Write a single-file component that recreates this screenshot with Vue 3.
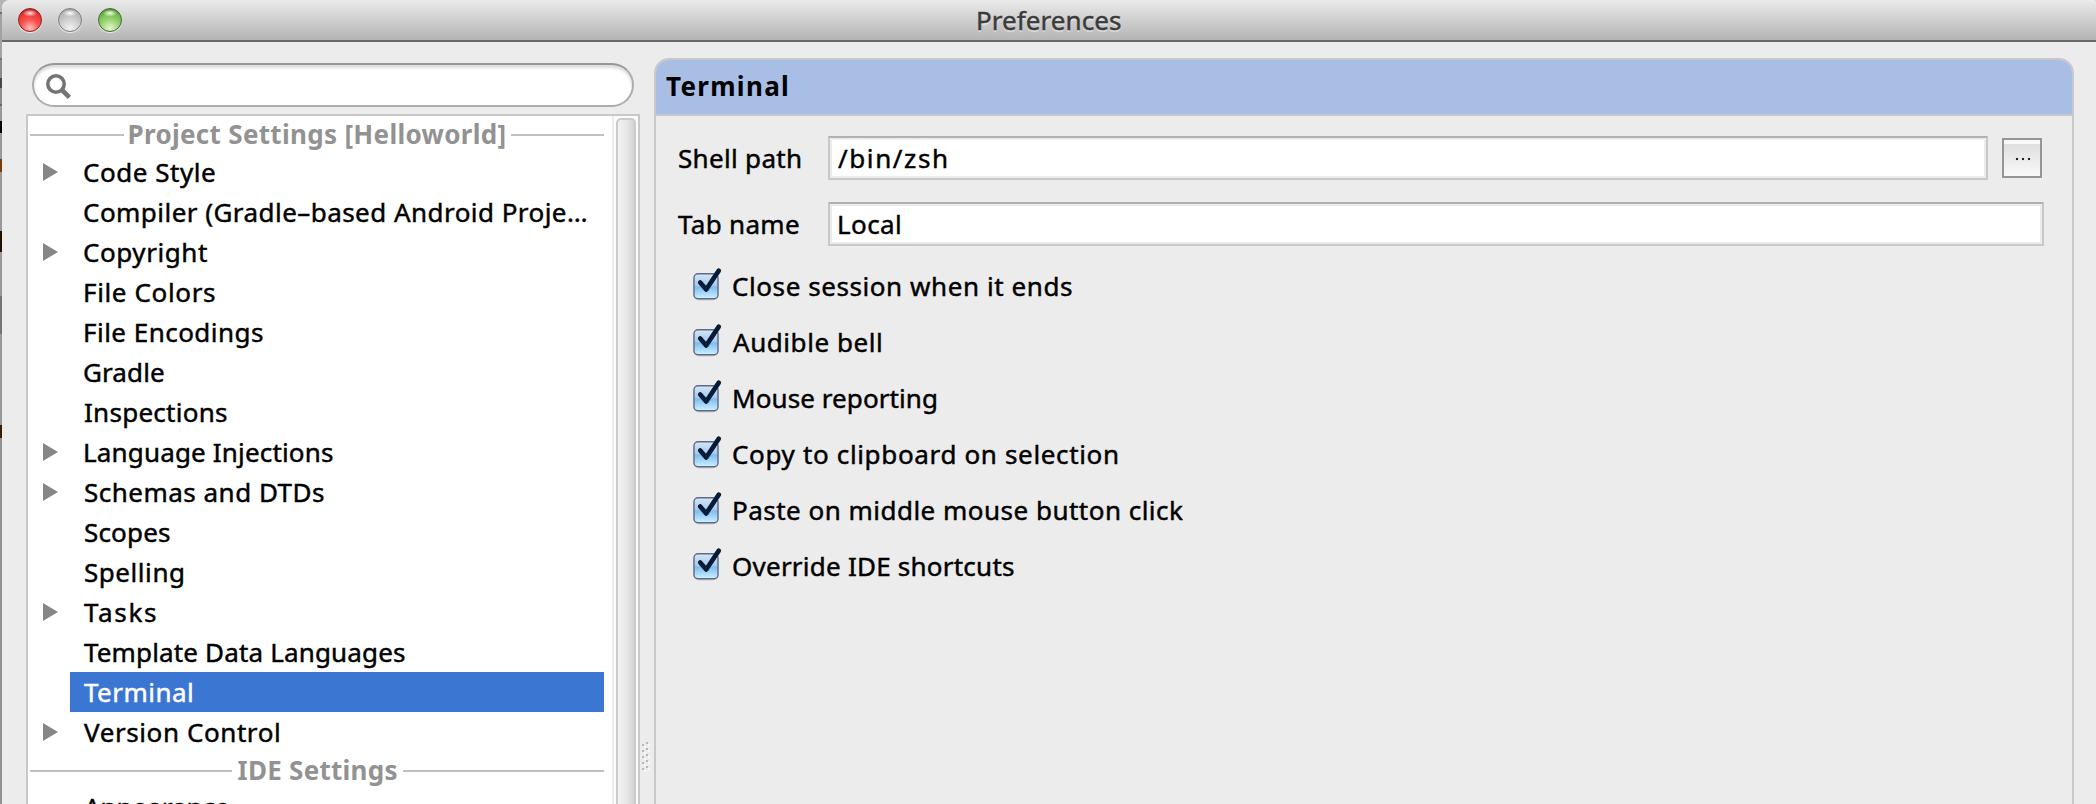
<script setup>
const FAMILY = '"Noto Sans", "Open Sans", sans-serif'
const ctx = document.createElement('canvas').getContext('2d')

// Tracks a label so that its ink spans exactly `width` pixels.
function fit(text, width, weight = 400) {
  ctx.font = `${weight} 26px ${FAMILY}`
  const m = ctx.measureText(text)
  const ink = m.actualBoundingBoxLeft + m.actualBoundingBoxRight
  const stem = /^[FILMPS]/.test(text) && weight === 400 ? 1 : 0
  return {
    width: `${width}px`,
    letterSpacing: `${((width - ink - stem) / (text.length - 1)).toFixed(3)}px`,
    textIndent: `${(m.actualBoundingBoxLeft + stem).toFixed(2)}px`,
  }
}

const tree = [
  { heading: true, text: 'Project Settings [Helloworld]', w: 375 },
  { text: 'Code Style', w: 131, open: true },
  { text: 'Compiler (Gradle–based Android Proje…', w: 502 },
  { text: 'Copyright', w: 123, open: true },
  { text: 'File Colors', w: 131 },
  { text: 'File Encodings', w: 179 },
  { text: 'Gradle', w: 80 },
  { text: 'Inspections', w: 143 },
  { text: 'Language Injections', w: 249, open: true },
  { text: 'Schemas and DTDs', w: 240, open: true },
  { text: 'Scopes', w: 86 },
  { text: 'Spelling', w: 99 },
  { text: 'Tasks', w: 72, open: true },
  { text: 'Template Data Languages', w: 321 },
  { text: 'Terminal', w: 108, selected: true },
  { text: 'Version Control', w: 195, open: true },
  { heading: true, text: 'IDE Settings', w: 159 },
  { text: 'Appearance', w: 145 },
]

const options = [
  { text: 'Close session when it ends', w: 339 },
  { text: 'Audible bell', w: 148 },
  { text: 'Mouse reporting', w: 203 },
  { text: 'Copy to clipboard on selection', w: 384 },
  { text: 'Paste on middle mouse button click', w: 450 },
  { text: 'Override IDE shortcuts', w: 281 },
]

const lights = ['red', 'gray', 'green']
</script>

<template>
  <div class="screen">
    <div class="window">
      <header class="titlebar">
        <div class="lights">
          <i v-for="c in lights" :key="c" class="light" :class="c"></i>
        </div>
        <span class="t title" :style="fit('Preferences', 144)">Preferences</span>
      </header>

      <main class="content">
        <aside class="sidebar">
          <div class="search">
            <svg width="28" height="28" viewBox="0 0 28 28">
              <path d="M17 17 L24.4 24.4" stroke="#747474" stroke-width="4.6" />
              <circle cx="11" cy="11" r="8.2" fill="#fff" stroke="#747474" stroke-width="3.6" />
            </svg>
          </div>
          <div class="tree-box">
            <div class="tree">
              <template v-for="n in tree" :key="n.text">
                <div v-if="n.heading" class="heading">
                  <i class="rule"></i>
                  <span class="t" :style="fit(n.text, n.w, 700)">{{ n.text }}</span>
                  <i class="rule"></i>
                </div>
                <div v-else class="node">
                  <div class="toggle">
                    <svg v-if="n.open" width="15" height="18" viewBox="0 0 15 18">
                      <path d="M0 0 L15 9 L0 18 Z" fill="#868686" />
                    </svg>
                  </div>
                  <div class="node-label" :class="{ selected: n.selected }">
                    <span class="t" :style="fit(n.text, n.w)">{{ n.text }}</span>
                  </div>
                </div>
              </template>
            </div>
            <div class="track"><div class="thumb"></div></div>
          </div>
        </aside>

        <div class="splitter">
          <svg width="12" height="36" viewBox="0 0 12 36">
            <g v-for="i in 5" :key="i">
              <rect x="2" :y="i * 6 - 4" width="2" height="2" fill="#b8b8b8" />
              <rect x="6" :y="i * 6 - 6" width="2" height="2" fill="#b8b8b8" />
              <rect x="4" :y="i * 6 - 2" width="2" height="2" fill="#f8f8f8" />
              <rect x="8" :y="i * 6 - 4" width="2" height="2" fill="#f8f8f8" />
            </g>
          </svg>
        </div>

        <section class="panel">
          <div class="panel-head">
            <span class="t" :style="fit('Terminal', 121, 700)">Terminal</span>
          </div>
          <div class="form">
            <div class="row">
              <div class="label"><span class="t" :style="fit('Shell path', 122)">Shell path</span></div>
              <div class="field"><span class="t" :style="fit('/bin/zsh', 108)">/bin/zsh</span></div>
              <div class="browse"><i></i><i></i><i></i></div>
            </div>
            <div class="row">
              <div class="label"><span class="t" :style="fit('Tab name', 121)">Tab name</span></div>
              <div class="field"><span class="t" :style="fit('Local', 62)">Local</span></div>
            </div>
          </div>
          <div class="options">
            <div v-for="o in options" :key="o.text" class="option">
              <svg width="32" height="36" viewBox="0 0 32 36">
                <defs>
                  <linearGradient id="box" x1="0" y1="0" x2="0" y2="1">
                    <stop offset="0" stop-color="#d6e6f7" />
                    <stop offset="0.48" stop-color="#a3cbf1" />
                    <stop offset="0.52" stop-color="#7fbaf0" />
                    <stop offset="1" stop-color="#cdf3ff" />
                  </linearGradient>
                </defs>
                <rect x="2.5" y="8" width="25" height="25.5" rx="5" fill="#000" opacity="0.12" />
                <rect x="3" y="6.8" width="24" height="25" rx="4" fill="url(#box)" stroke="#5f6a88" stroke-width="1.4" />
                <path d="M9.2 15.5 L15.2 22.5 L27.8 3.6" fill="none" stroke="#041c38" stroke-width="4.6" stroke-linecap="round" stroke-linejoin="round" />
              </svg>
              <span class="t" :style="fit(o.text, o.w)">{{ o.text }}</span>
            </div>
          </div>
        </section>
      </main>
    </div>
  </div>
</template>

<style>
html,
body {
  overflow: hidden;
}
</style>

<style scoped>
.screen {
  width: 2096px;
  height: 804px;
  padding-left: 2px;
  box-sizing: border-box;
  overflow: hidden;
  font: 400 26px "Noto Sans", "Open Sans", sans-serif;
  color: #000;
  background: linear-gradient(
    #b4b4b4 0 12px, #707070 12px 14px, #a2a2a2 14px 58px, #757575 58px 60px,
    #8c8c8c 60px 78px, #414852 78px 88px, #8c8c8c 88px 104px, #666 104px 106px,
    #999 106px 121px, #000 121px 133px, #999 133px 159px, #7a3d08 159px 172px,
    #999 172px 231px, #201000 231px 252px, #999 252px 296px, #747474 296px 334px,
    #999 334px 425px, #3a1c04 425px 438px, #929292 438px);
}
.t {
  display: inline-block;
  flex: none;
  white-space: pre;
  -webkit-text-stroke: 0.45px currentColor;
}
.window {
  display: flex;
  flex-direction: column;
  height: 804px;
  background: #ececec;
  border-radius: 8px 2px 0 0;
  overflow: hidden;
}
.titlebar {
  display: flex;
  align-items: center;
  height: 40px;
  flex: none;
  border-bottom: 2px solid #686868;
  background: linear-gradient(#ebebeb, #d2d2d2 45%, #b4b4b4);
}
.lights {
  display: flex;
  gap: 16px;
  width: 959px;
  padding-left: 16px;
}
.light {
  width: 24px;
  height: 24px;
  border-radius: 50%;
  box-shadow: 0 1px 1px rgba(255, 255, 255, 0.7);
}
.red {
  background:
    radial-gradient(ellipse 7px 3.5px at 50% 19%, #ffe3e0, transparent),
    radial-gradient(circle at 50% 88%, #ffc0bb 0, #f7504b 42%, #ee3b39 66%, #8e1a1a 100%);
  border: 1.5px solid #8d2020;
  box-sizing: border-box;
}
.gray {
  background:
    radial-gradient(ellipse 7px 3.5px at 50% 19%, #fff, transparent),
    radial-gradient(circle at 50% 88%, #f2f2f2 0, #c9c9c9 50%, #b4b4b4 75%, #8a8a8a 100%);
  border: 1.5px solid #808080;
  box-sizing: border-box;
}
.green {
  background:
    radial-gradient(ellipse 7px 3.5px at 50% 19%, #f4ffec, transparent),
    radial-gradient(circle at 50% 88%, #e6f7c8 0, #93cf6d 45%, #74bb50 68%, #3d6e28 100%);
  border: 1.5px solid #456b33;
  box-sizing: border-box;
}
.title {
  color: #3b3b3b;
  line-height: 40px;
  text-shadow: 0 2px 1px rgba(255, 255, 255, 0.45);
}
.content {
  display: flex;
  flex: 1;
  min-height: 0;
}
.sidebar {
  display: flex;
  flex-direction: column;
  width: 614px;
  margin-left: 24px;
  padding-top: 21px;
}
.search {
  display: flex;
  align-items: center;
  height: 44px;
  width: 602px;
  flex: none;
  margin: 0 0 7px 6px;
  padding-left: 11px;
  box-sizing: border-box;
  border: 2px solid #adadad;
  border-top-color: #979797;
  border-radius: 22px;
  background: #fff;
  box-shadow: inset 0 3px 3px #dcdcdc;
}
.search svg {
  margin-top: 4px;
}
.tree-box {
  display: flex;
  flex: 1;
  min-height: 0;
  border: 2px solid #c8c8c8;
  border-bottom: 0;
  background: #fff;
}
.tree {
  width: 576px;
  margin-right: 8px;
  overflow: hidden;
}
.heading {
  display: flex;
  align-items: center;
  gap: 6px;
  height: 36px;
  padding-left: 2px;
  font-weight: 700;
  line-height: 36px;
  color: #929292;
}
.heading .t,
.panel-head .t {
  -webkit-text-stroke-width: 0;
}
.rule {
  flex: 1;
  height: 2px;
  margin-top: 2px;
  background: #c0c0c0;
}
.node {
  display: flex;
  height: 40px;
  line-height: 40px;
}
.node:last-child {
  line-height: 38px;
}
.toggle {
  display: flex;
  align-items: center;
  width: 42px;
  padding-left: 15px;
  box-sizing: border-box;
}
.node-label {
  flex: 1;
  padding-left: 14px;
}
.selected {
  color: #fff;
  background: #3c76d3;
}
.track {
  flex: 1;
  padding: 2px 2px 0;
  border-left: 2px solid #ebebeb;
  background: #fbfbfb;
}
.thumb {
  height: 720px;
  box-sizing: border-box;
  border: 2px solid #cbcbcb;
  border-radius: 5px;
  background: linear-gradient(90deg, #f3f3f3, #e6e6e6 55%, #d4d4d4);
}
.splitter {
  display: flex;
  width: 14px;
  padding-top: 700px;
}
.splitter svg {
  flex: none;
}
.panel {
  display: flex;
  flex-direction: column;
  width: 1420px;
  height: 770px;
  margin-top: 16px;
  box-sizing: border-box;
  border: 2px solid #c8c8c8;
  border-radius: 15px 15px 0 0;
}
.panel-head {
  height: 54px;
  flex: none;
  padding-left: 10px;
  border-bottom: 2px solid #c8c8c8;
  border-radius: 13px 13px 0 0;
  background: #a9bee4;
  font-weight: 700;
  line-height: 52px;
}
.form {
  display: flex;
  flex-direction: column;
  gap: 22px;
  padding: 20px 28px 0 22px;
}
.row {
  display: flex;
  align-items: center;
  height: 44px;
  line-height: 44px;
}
.label {
  width: 150px;
}
.field {
  flex: 1;
  height: 44px;
  box-sizing: border-box;
  padding-left: 8px;
  border: 2px solid #c8c8c8;
  border-top-color: #b0b0b0;
  background: #fff;
  box-shadow: inset 0 0 0 2px #ececec, inset 0 2px 0 #d8d8d8;
  line-height: 40px;
}
.browse {
  display: flex;
  align-items: center;
  justify-content: center;
  gap: 4px;
  width: 40px;
  height: 40px;
  box-sizing: border-box;
  margin: 0 2px 0 14px;
  padding: 2px 0 0 2px;
  border: 2px solid #959595;
  background: linear-gradient(#f8f8f8 0 4px, #dfdfdf 4px, #f9f9f9);
}
.browse i {
  width: 2px;
  height: 2px;
  background: #222;
  box-shadow: 0 0 1px #777;
}
.options {
  display: flex;
  flex-direction: column;
  padding: 12px 0 0 35px;
}
.option {
  display: flex;
  align-items: center;
  gap: 10px;
  height: 56px;
  line-height: 56px;
}
.option svg {
  flex: none;
  margin-bottom: 3px;
}
</style>
